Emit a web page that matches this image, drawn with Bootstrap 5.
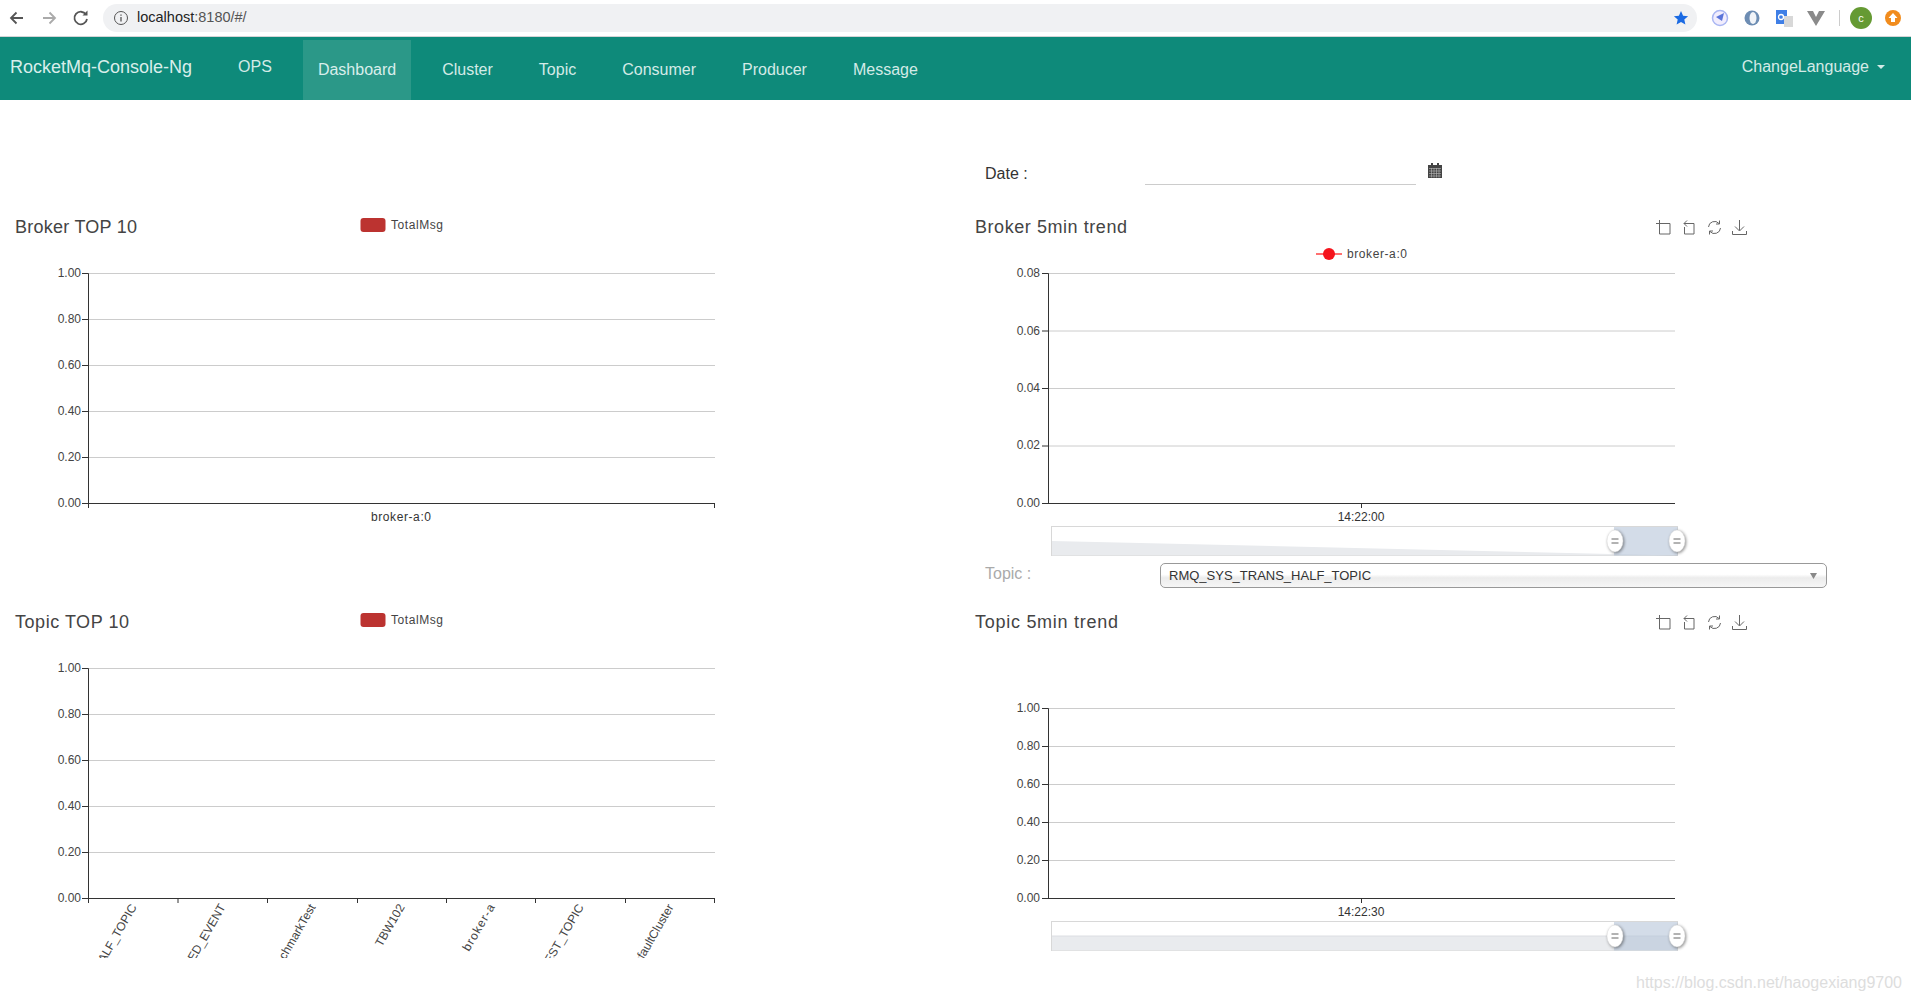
<!DOCTYPE html>
<html lang="en">
<head>
<meta charset="utf-8">
<title>RocketMq-Console-Ng</title>
<link rel="stylesheet" href="https://cdn.jsdelivr.net/npm/bootstrap@5.3.0/dist/css/bootstrap.min.css">
<style>
html,body{height:100%;overflow:hidden}
body{font-family:"Liberation Sans",Arial,sans-serif;color:#333;background:#fff;position:relative}
.chrome-bar{height:37px;border-bottom:1px solid #d4d4d6;padding:4px 0 0 0;background:#fff}
.chrome-nav{width:103px;flex:none;height:28px}
.omni{width:1594px;height:28px;border-radius:14px;background:#f0f1f3;flex:none;padding:0 8px 0 10px;font-size:14.5px;color:#222}
.omni-host{margin-left:8px}
.omni-rest{color:#555}
.ext-icons{width:214px;flex:none;height:28px}
.ext-c{font-family:"Liberation Sans",Arial,sans-serif;font-size:11px;fill:#fff;text-anchor:middle}
.top-nav{height:63px;background:#0e8a7a;padding:0 0 4px 10px}
.brand-link{color:#d9eeeb;font-size:18px;padding:0;margin:0 31px 0 0;line-height:20px}
.brand-link:hover{color:#fff}
.top-nav .side-nav{gap:16px}
.top-nav .side-nav .nav-link{color:#d4ebe7;font-size:16px;padding:0 15px;line-height:20px;height:60px;display:flex;align-items:center}
.top-nav .side-nav.ops-nav{align-self:flex-start;margin-right:16px}
.top-nav .side-nav.main-nav{align-self:flex-end;margin-bottom:-4px}
.top-nav .side-nav .nav-link.now{background:#2b9888;color:#d9eeeb}
.lang-link{color:#d4ebe7;font-size:16px;padding:0;margin-right:26px;line-height:20px;text-decoration:none}
.lang-link.dropdown-toggle::after{margin-left:8px;border-top-width:4px;border-left-width:4px;border-right-width:4px;vertical-align:3px}
.dash-left{width:955px;flex:none;padding-top:100px}
.dash-right{flex:1 1 auto;min-width:0}
.date-row{height:100px;padding:0 0 0 30px}
.date-row .lbl{width:160px;font-size:16px;padding-top:63px;line-height:22px}
.date-field{width:271px;height:85px;border-bottom:1px solid #ccc}
.cal-ico{margin:63px 0 0 12px;display:block}
.topic-row{height:35px;padding:3px 0 0 30px}
.topic-lbl{width:175px;font-size:16px;color:#aaa;line-height:20px;padding-top:1px}
.topic-sel{width:667px;height:25px;padding:0 20px 0 8px;font-size:13px;line-height:23px;color:#333;border:1px solid #999;border-radius:5px;background-color:#fff;background-image:url("data:image/svg+xml,%3Csvg xmlns='http://www.w3.org/2000/svg' width='7' height='6'%3E%3Cpath d='M0 0h7L3.500 6z' fill='%23888'/%3E%3C/svg%3E"),linear-gradient(#fff 45%,#ececec 60%,#f6f6f6);background-repeat:no-repeat;background-position:right 9px center,0 0;background-size:7px 6px,100% 100%;box-shadow:none}
.chart-svg{display:block;width:100%}
.chart-tall{height:395px}
.chart-mid{height:360px}
.chart-svg text{font-family:"Liberation Sans",Arial,sans-serif}
.t-title{font-size:18px;fill:#444}
.t-ax{font-size:12px;fill:#444}
.t-ax-r{font-size:12px;fill:#444;text-anchor:end}
.t-ax-m{font-size:12px;fill:#333;text-anchor:middle}
.gl{stroke:#ccc;stroke-width:1;transform:translateY(1px)}
.ax{stroke:#333;stroke-width:1;fill:none;transform:translateY(1px)}
.tb{stroke:#666;stroke-width:1;fill:none}
.wm{position:absolute;right:9px;top:973px;font-size:16px;color:#ddd;line-height:20px}
</style>
</head>
<body>
<div class="chrome-bar d-flex align-items-start">
  <div class="chrome-nav">
    <svg width="103" height="28" fill="none" stroke-width="1.8">
      <path d="M23 14H11M16.5 8.5 11 14l5.500 5.500" stroke="#555"/>
      <path d="M43 14h12M49.500 8.500 55 14l-5.500 5.500" stroke="#aaa"/>
      <path d="M86 10.500A6.300 6.300 0 1 0 87 15" stroke="#555"/><path d="M87.500 6.500v5h-5z" fill="#555"/>
    </svg>
  </div>
  <div class="omni d-flex align-items-center">
    <svg width="16" height="16" fill="none" stroke="#555"><circle cx="8" cy="8" r="6.500"/><path d="M8 7v4.500M8 4.500v1.300" stroke-width="1.300"/></svg>
    <span class="omni-host">localhost<span class="omni-rest">:8180/#/</span></span>
    <svg class="ms-auto" width="16" height="16"><path d="M8 1l2.100 4.700 5 .5-3.800 3.300 1.100 5L8 11.900 3.600 14.500l1.100-5L.9 6.200l5-.5z" fill="#1a6ae3"/></svg>
  </div>
  <div class="ext-icons">
    <svg width="214" height="28">
      <circle cx="23" cy="14" r="7.500" fill="#f1edfd" stroke="#a9b6f2" stroke-width="1.500"/><path d="M19 13l8-4-2 8-3-2z" fill="#5a74d9"/>
      <circle cx="55" cy="14" r="7.500" fill="#6d8db3"/><ellipse cx="56" cy="14" rx="3.500" ry="6" fill="#f1f4f8"/>
      <rect x="79" y="6" width="11" height="14" fill="#3f7fe6"/><rect x="87" y="12" width="9" height="11" fill="#d8d8d8"/><circle cx="84" cy="13" r="2.500" fill="none" stroke="#fff" stroke-width="1.300"/>
      <path d="M110 7h6l3 6 3-6h6l-9 15z" fill="#8a8a8a"/>
      <path d="M142.500 6v16" stroke="#ccc"/>
      <circle cx="164" cy="14" r="11" fill="#659a33"/>
      <text class="ext-c" x="164" y="18">c</text>
      <circle cx="196" cy="14" r="8" fill="#f18c1d"/><path d="M196 9l4.500 5H198v4h-4v-4h-2.500z" fill="#fff"/>
    </svg>
  </div>
</div>

<nav class="navbar navbar-expand top-nav align-items-stretch flex-nowrap">
  <a class="navbar-brand brand-link align-self-center" href="#">RocketMq-Console-Ng</a>
  <ul class="navbar-nav side-nav ops-nav">
    <li class="nav-item"><a class="nav-link" href="#">OPS</a></li>
  </ul>
  <ul class="navbar-nav side-nav main-nav">
    <li class="nav-item"><a class="nav-link now" href="#">Dashboard</a></li>
    <li class="nav-item"><a class="nav-link" href="#">Cluster</a></li>
    <li class="nav-item"><a class="nav-link" href="#">Topic</a></li>
    <li class="nav-item"><a class="nav-link" href="#">Consumer</a></li>
    <li class="nav-item"><a class="nav-link" href="#">Producer</a></li>
    <li class="nav-item"><a class="nav-link" href="#">Message</a></li>
  </ul>
  <a class="lang-link dropdown-toggle ms-auto align-self-center" href="#">ChangeLanguage</a>
</nav>

<svg width="0" height="0" class="position-absolute">
  <defs>
    <symbol id="i-zoom" viewBox="0 0 15 15"><path class="tb" d="M3.500 0V14H14V3.500H0"/></symbol>
    <symbol id="i-back" viewBox="0 0 15 15"><path class="tb" d="M6 .5 3 3.500 6 6.500M3 3.500h10V14H3.500V7"/></symbol>
    <symbol id="i-restore" viewBox="0 0 15 15"><path class="tb" d="M1.500 7a6 6 0 0 1 10.500-3.500M13.500 8A6 6 0 0 1 3 11.500M12.500.5v3.500H9M2.500 14.500V11H6"/></symbol>
    <symbol id="i-save" viewBox="0 0 15 15"><path class="tb" d="M7.500 0v10.500M3 6.500l4.500 4.500L12 6.500M.5 11v3.500h14V11"/></symbol>
    <clipPath id="lblclip"><rect x="0" y="300" width="955" height="63"/></clipPath>
  </defs>
</svg>

<main class="d-flex">
  <section class="dash-left">
    <svg class="chart-svg chart-tall">
      <text class="t-title" x="15" y="33" textLength="122">Broker TOP 10</text>
      <rect x="360.500" y="18" width="25" height="14" rx="3" fill="#bc3330"/>
      <text class="t-ax" x="391" y="29" textLength="52">TotalMsg</text>
      <path class="gl" d="M88 72.500H715M88 118.500H715M88 164.500H715M88 210.500H715M88 256.500H715"/>
      <path class="ax" d="M82 72.500H88.500V307M82 118.500H88M82 164.500H88M82 210.500H88M82 256.500H88M82 302.500H715M714.500 302.500V307"/>
      <text class="t-ax-r" x="81" y="77">1.00</text><text class="t-ax-r" x="81" y="123">0.80</text><text class="t-ax-r" x="81" y="169">0.60</text><text class="t-ax-r" x="81" y="215">0.40</text><text class="t-ax-r" x="81" y="261">0.20</text><text class="t-ax-r" x="81" y="307">0.00</text>
      <text class="t-ax-m" x="401" y="321" textLength="60">broker-a:0</text>
    </svg>
    <svg class="chart-svg chart-tall">
      <text class="t-title" x="15" y="33" textLength="114">Topic TOP 10</text>
      <rect x="360.500" y="18" width="25" height="14" rx="3" fill="#bc3330"/>
      <text class="t-ax" x="391" y="29" textLength="52">TotalMsg</text>
      <path class="gl" d="M88 72.500H715M88 118.500H715M88 164.500H715M88 210.500H715M88 256.500H715"/>
      <path class="ax" d="M82 72.500H88.500V307M82 118.500H88M82 164.500H88M82 210.500H88M82 256.500H88M82 302.500H715M178 302.500V307M267.500 302.500V307M357.500 302.500V307M446.500 302.500V307M535.500 302.500V307M625.500 302.500V307M714.500 302.500V307"/>
      <text class="t-ax-r" x="81" y="77">1.00</text><text class="t-ax-r" x="81" y="123">0.80</text><text class="t-ax-r" x="81" y="169">0.60</text><text class="t-ax-r" x="81" y="215">0.40</text><text class="t-ax-r" x="81" y="261">0.20</text><text class="t-ax-r" x="81" y="307">0.00</text>
      <g clip-path="url(#lblclip)">
        <text class="t-ax-r" transform="translate(137 312) rotate(-60)">HALF_TOPIC</text>
        <text class="t-ax-r" transform="translate(226 312) rotate(-60)">VED_EVENT</text>
        <text class="t-ax-r" transform="translate(316 312) rotate(-60)">chmarkTest</text>
        <text class="t-ax-r" transform="translate(405 312) rotate(-60)">TBW102</text>
        <text class="t-ax-r" transform="translate(495 312) rotate(-60)" textLength="52">broker-a</text>
        <text class="t-ax-r" transform="translate(584 312) rotate(-60)">TEST_TOPIC</text>
        <text class="t-ax-r" transform="translate(674 312) rotate(-60)">efaultCluster</text>
      </g>
    </svg>
  </section>

  <section class="dash-right">
    <div class="date-row d-flex align-items-start">
      <div class="lbl">Date :</div>
      <div class="date-field"></div>
      <svg class="cal-ico" width="14" height="15"><path d="M0 2h14v13H0z" fill="#444"/><path d="M3 0h2v3H3zM9 0h2v3H9z" fill="#444"/><path d="M1 5.500h12M1 8h12M1 10.500h12M1 13h12M3.500 5v9.500M6 5v9.500M8.500 5v9.500M11 5v9.500" stroke="#bbb" stroke-width=".6"/></svg>
    </div>
    <svg class="chart-svg chart-mid">
      <text class="t-title" x="20" y="33" textLength="152">Broker 5min trend</text>
      <use href="#i-zoom" x="701" y="20" width="15" height="15"/><use href="#i-back" x="726" y="20" width="15" height="15"/><use href="#i-restore" x="752" y="20" width="15" height="15"/><use href="#i-save" x="777" y="20" width="15" height="15"/>
      <path d="M361 54h26" stroke="#ff7070" stroke-width="2"/><circle cx="374" cy="54" r="6" fill="#f5141c"/>
      <text class="t-ax" x="392" y="58" textLength="60">broker-a:0</text>
      <path class="gl" d="M93 72.500H720M93 130H720M93 187.500H720M93 245H720"/>
      <path class="ax" d="M87 72.500H93.500V302.500M87 130H93M87 187.500H93M87 245H93M87 302.500H720M406.500 302.500V307"/>
      <text class="t-ax-r" x="85" y="77">0.08</text><text class="t-ax-r" x="85" y="135">0.06</text><text class="t-ax-r" x="85" y="192">0.04</text><text class="t-ax-r" x="85" y="249">0.02</text><text class="t-ax-r" x="85" y="307">0.00</text>
      <text class="t-ax-m" x="406" y="321">14:22:00</text>
      <rect x="96.500" y="326.500" width="626" height="29" fill="#fff" stroke="#d8d8d8"/>
      <path d="M97 341 722 355.500H97z" fill="#e9ebee"/>
      <rect x="659" y="327" width="63.500" height="28.500" fill="#b6c4d9" fill-opacity=".6"/>
      <g fill="#fff" stroke="#ddd" stroke-width=".5" style="filter:drop-shadow(1px 1px 1.500px rgba(0,0,0,.45))">
        <ellipse cx="660" cy="341" rx="8" ry="11"/><ellipse cx="722" cy="341" rx="8" ry="11"/>
      </g>
      <path d="M656.500 339h7M656.500 343h7M718.500 339h7M718.500 343h7" stroke="#666"/>
    </svg>
    <div class="topic-row d-flex align-items-start">
      <div class="topic-lbl">Topic :</div>
      <select class="form-select topic-sel"><option>RMQ_SYS_TRANS_HALF_TOPIC</option></select>
    </div>
    <svg class="chart-svg chart-tall">
      <text class="t-title" x="20" y="33" textLength="143">Topic 5min trend</text>
      <use href="#i-zoom" x="701" y="20" width="15" height="15"/><use href="#i-back" x="726" y="20" width="15" height="15"/><use href="#i-restore" x="752" y="20" width="15" height="15"/><use href="#i-save" x="777" y="20" width="15" height="15"/>
      <path class="gl" d="M93 112.500H720M93 150.500H720M93 188.500H720M93 226.500H720M93 264.500H720"/>
      <path class="ax" d="M87 112.500H93.500V302.500M87 150.500H93M87 188.500H93M87 226.500H93M87 264.500H93M87 302.500H720M406.500 302.500V307"/>
      <text class="t-ax-r" x="85" y="117">1.00</text><text class="t-ax-r" x="85" y="155">0.80</text><text class="t-ax-r" x="85" y="193">0.60</text><text class="t-ax-r" x="85" y="231">0.40</text><text class="t-ax-r" x="85" y="269">0.20</text><text class="t-ax-r" x="85" y="307">0.00</text>
      <text class="t-ax-m" x="406" y="321">14:22:30</text>
      <rect x="96.500" y="326.500" width="626" height="29" fill="#fff" stroke="#d8d8d8"/>
      <rect x="97" y="341" width="625" height="14.500" fill="#e9ebee"/><path d="M97 341H722" stroke="#dcdee2"/>
      <rect x="659" y="327" width="63.500" height="28.500" fill="#b6c4d9" fill-opacity=".6"/>
      <g fill="#fff" stroke="#ddd" stroke-width=".5" style="filter:drop-shadow(1px 1px 1.500px rgba(0,0,0,.45))">
        <ellipse cx="660" cy="341" rx="8" ry="11"/><ellipse cx="722" cy="341" rx="8" ry="11"/>
      </g>
      <path d="M656.500 339h7M656.500 343h7M718.500 339h7M718.500 343h7" stroke="#666"/>
    </svg>
  </section>
</main>
<div class="wm">https://blog.csdn.net/haogexiang9700</div>
<script src="https://cdn.jsdelivr.net/npm/bootstrap@5.3.0/dist/js/bootstrap.bundle.min.js"></script>
</body>
</html>
